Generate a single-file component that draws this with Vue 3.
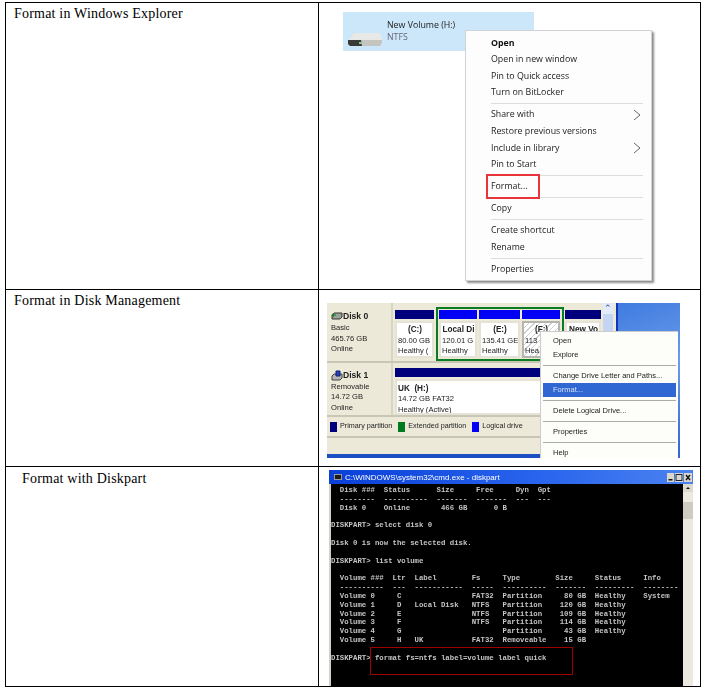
<script setup>
const explorerMenu = [
  { t: 'Open', b: true }, { t: 'Open in new window' }, { t: 'Pin to Quick access' }, { t: 'Turn on BitLocker' }, { sep: true },
  { t: 'Share with', arrow: true }, { t: 'Restore previous versions' }, { t: 'Include in library', arrow: true }, { t: 'Pin to Start' }, { sep: true },
  { t: 'Format...', mark: true }, { sep: true }, { t: 'Copy' }, { sep: true },
  { t: 'Create shortcut' }, { t: 'Rename' }, { sep: true }, { t: 'Properties' }
]
const diskMenu = [
  { t: 'Open' }, { t: 'Explore' }, { sep: true }, { t: 'Change Drive Letter and Paths...' }, { t: 'Format...', active: true }, { sep: true },
  { t: 'Delete Logical Drive...' }, { sep: true }, { t: 'Properties' }, { sep: true }, { t: 'Help' }
]
const partitions = [
  { name: '(C:)', size: '80.00 GB', state: 'Healthy (', w: 39, bar: 'navy', after: 3 },
  { name: 'Local Di', size: '120.01 G', state: 'Healthy', w: 38, bar: 'blue', after: 0 },
  { name: '(E:)', size: '135.41 GE', state: 'Healthy', w: 41, bar: 'blue', after: 0 },
  { name: '(F:)', size: '113', state: 'Hea', w: 38, bar: 'blue', hatch: true, after: 3 },
  { name: 'New Vo', size: '', state: '', w: 36, bar: 'navy', after: 0 }
]
const consoleText = `  Disk ###  Status      Size     Free     Dyn  Gpt
  --------  ----------  -------  -------  ---  ---
  Disk 0    Online       466 GB      0 B

DISKPART> select disk 0

Disk 0 is now the selected disk.

DISKPART> list volume

  Volume ###  Ltr  Label        Fs     Type        Size     Status     Info
  ----------  ---  -----------  -----  ----------  -------  ---------  --------
  Volume 0     C                FAT32  Partition     80 GB  Healthy    System
  Volume 1     D   Local Disk   NTFS   Partition    120 GB  Healthy
  Volume 2     E                NTFS   Partition    109 GB  Healthy
  Volume 3     F                NTFS   Partition    114 GB  Healthy
  Volume 4     G                       Partition     43 GB  Healthy
  Volume 5     H   UK           FAT32  Removeable    15 GB

DISKPART> format fs=ntfs label=volume label quick`
</script>

<template>
  <main class="table">
    <div class="cell label first">Format in Windows Explorer</div>
    <div class="cell shot explorer">
      <div class="tile">
        <svg class="drive" viewBox="0 0 36 16" width="36" height="16" aria-hidden="true">
          <path d="M7 1 H33 L35 8 H2 Z" fill="#e8e8e6" />
          <path d="M1 8 H35 V11 L33 14 H3 L1 12 Z" fill="#c4c4c0" />
          <path d="M1 8 H14 L15 14 H3 L1 12 Z" fill="#3a3a38" />
          <path d="M12 10 h3 v2 h-3 Z" fill="#8fc98f" />
        </svg>
        <div class="tile-text">
          <span class="tile-name">New Volume (H:)</span>
          <span class="tile-fs">NTFS</span>
        </div>
      </div>
      <ul class="win-menu">
        <template v-for="(m, i) in explorerMenu" :key="i">
          <li v-if="m.sep" class="win-sep"></li>
          <li v-else class="win-item" :class="{ bold: m.b }">
            <span :class="{ mark: m.mark }">{{ m.t }}</span>
            <svg v-if="m.arrow" class="chev" viewBox="0 0 8 12" width="8" height="12" aria-hidden="true"><path d="M1 1 L7 6 L1 11" fill="none" stroke="#666" stroke-width="1" /></svg>
          </li>
        </template>
      </ul>
    </div>

    <div class="cell label">Format in Disk Management</div>
    <div class="cell shot diskwrap">
      <div class="dm">
        <div class="dm-main">
          <div class="disk-row d0">
            <div class="disk-info">
              <b>
                <svg class="dico" viewBox="0 0 12 11" width="12" height="11" aria-hidden="true">
                  <path d="M3 2 H11 V6 L9 8 H1 V4 Z" fill="#9aa39a" stroke="#333" stroke-width="1" />
                  <path d="M5 4 H1 M1 4 L3 2.5 M1 4 L3 5.5" fill="none" stroke="#1f7a2c" stroke-width="1.2" />
                </svg>Disk 0
              </b>
              <span>Basic</span><span>465.76 GB</span><span>Online</span>
            </div>
            <div class="parts">
              <div class="green"></div>
              <div v-for="p in partitions" :key="p.name" class="part" :style="{ width: p.w + 'px', marginRight: p.after + 'px' }">
                <div class="bar" :class="p.bar"></div>
                <div class="pbox" :class="{ hatch: p.hatch }">
                  <b>{{ p.name }}</b><span>{{ p.size }}</span><span>{{ p.state }}</span>
                </div>
              </div>
            </div>
          </div>
          <div class="disk-row d1">
            <div class="disk-info">
              <b>
                <svg class="dico" viewBox="0 0 12 11" width="12" height="11" aria-hidden="true">
                  <path d="M1 6 L3 4 H11 V8 L9 10 H1 Z" fill="#b5b5b5" stroke="#444" stroke-width="1" />
                  <path d="M5 1 H9 V6 H5 Z" fill="#2a3fc0" stroke="#10206e" stroke-width="1" />
                </svg>Disk 1
              </b>
              <span>Removable</span><span>14.72 GB</span><span>Online</span>
            </div>
            <div class="uk">
              <div class="bar navy"></div>
              <div class="pbox wide"><b>UK&nbsp; (H:)</b><span>14.72 GB FAT32</span><span>Healthy (Active)</span></div>
            </div>
          </div>
          <div class="legend">
            <i class="sw navy"></i><span>Primary partition</span>
            <i class="sw greenfill"></i><span>Extended partition</span>
            <i class="sw blue"></i><span>Logical drive</span>
          </div>
          <div class="status"></div>
          <div class="taskbar"></div>
        </div>
        <div class="dm-scroll"><span>⌃</span></div>
        <div class="desktop"></div>
        <ul class="xp-menu">
          <template v-for="(m, i) in diskMenu" :key="i">
            <li v-if="m.sep" class="xp-sep"></li>
            <li v-else class="xp-item" :class="{ active: m.active }">{{ m.t }}</li>
          </template>
        </ul>
      </div>
    </div>

    <div class="cell label third">Format with Diskpart</div>
    <div class="cell shot conwrap">
      <div class="con">
        <div class="con-title">
          <i class="con-ico"></i>
          <span>C:\WINDOWS\system32\cmd.exe - diskpart</span>
          <div class="con-btns">
            <svg viewBox="0 0 7 9" width="7" height="9" aria-hidden="true"><rect width="7" height="9" fill="#d9d6cc" /><rect x="1.5" y="6" width="4" height="1.5" fill="#111" /></svg>
            <svg viewBox="0 0 8 9" width="8" height="9" aria-hidden="true"><rect width="8" height="9" fill="#d9d6cc" /><rect x="1" y="1.5" width="6" height="6" fill="none" stroke="#222" /></svg>
            <svg viewBox="0 0 8 9" width="8" height="9" aria-hidden="true"><rect width="8" height="9" fill="#d9d6cc" /><path d="M2 2 L6 7 M6 2 L2 7" stroke="#111" stroke-width="1.4" /></svg>
          </div>
        </div>
        <div class="con-body">
          <pre class="con-text">{{ consoleText }}</pre>
          <div class="con-scroll">
            <span class="up"><svg viewBox="0 0 10 8" width="10" height="8" aria-hidden="true"><path d="M3 5 L5 3 L7 5 Z" fill="#111" /></svg></span>
            <span class="thumb"></span>
          </div>
          <div class="con-mark"></div>
        </div>
      </div>
    </div>
  </main>
</template>

<style scoped>
.table {
  box-sizing: border-box;
  display: grid;
  grid-template-columns: 313px 382px;
  grid-template-rows: 287px 177px 220px;
  width: 696px;
  margin: 2px 0 0 5px;
  border-top: 1px solid #000;
  border-left: 1px solid #000;
  height: 685px;
  background: #fff;
}
.cell {
  box-sizing: border-box;
  border-right: 1px solid #000;
  border-bottom: 1px solid #000;
  position: relative;
  overflow: hidden;
}
.label {
  font-family: "Liberation Serif", serif;
  font-size: 14px;
  letter-spacing: .2px;
  color: #000;
  padding: 3px 0 0 8px;
  line-height: 16px;
}
.third { padding-left: 16px; padding-top: 4px; }

.shot > * { filter: blur(.3px); }

/* Explorer */
.explorer { font-family: "Open Sans", sans-serif; }
.tile {
  width: 191px;
  height: 39px;
  margin: 9px 0 0 24px;
  background: #cce6fa;
  display: flex;
  align-items: flex-start;
  gap: 4px;
  padding: 0 0 0 4px;
  box-sizing: border-box;
}
.drive { margin-top: 20px; flex: none; }
.tile-text { display: flex; flex-direction: column; padding-top: 7px; font-size: 8.8px; line-height: 12px; }
.tile-name { color: #222; }
.tile-fs { color: #667; }
.win-menu {
  position: absolute;
  left: 146px;
  top: 27px;
  width: 187px;
  height: 251px;
  margin: 0;
  padding: 3.5px 8px 0 25px;
  box-sizing: border-box;
  list-style: none;
  background: #fdfdfd;
  border: 1px solid #cfd3d6;
  box-shadow: 2px 2px 2px #8c8c8c;
  font-size: 8.8px;
  color: #222;
}
.win-item { height: 16.6px; line-height: 16.6px; display: flex; justify-content: space-between; align-items: center; }
.win-item.bold { font-weight: 700; color: #111; }
.win-sep { height: 1px; background: #ddd; margin: 2.5px 0 2px; }
.chev { margin-right: 2px; }
.mark {
  outline: 2px solid #e8343a;
  padding: 2px 10px 3px 3px;
  margin-left: -3px;
}

/* Disk Management */
.dm {
  position: absolute;
  left: 8px;
  top: 13px;
  width: 353px;
  height: 155px;
  display: flex;
  background: #ece9d8;
  font-family: "Liberation Sans", sans-serif;
  font-size: 7.6px;
  line-height: 10.7px;
  color: #222;
}
.dm-main { width: 276px; display: flex; flex-direction: column; flex: none; }
.disk-row { display: flex; border-bottom: 2px solid #c9c6b6; box-sizing: border-box; }
.d0 { height: 60px; }
.d1 { height: 55px; }
.disk-info {
  width: 66px;
  flex: none;
  padding: 8px 0 0 4px;
  box-sizing: border-box;
  display: flex;
  flex-direction: column;
  border-right: 2px solid #d8d5c5;
}
.d1 .disk-info { padding-top: 7px; }
.disk-info b { font-size: 8.6px; line-height: 11px; padding-bottom: 1px; display: flex; align-items: center; }
.dico { margin-right: 0; flex: none; }
.parts { position: relative; display: flex; gap: 2px; padding: 7px 0 0 2px; flex: 1; }
.green {
  position: absolute;
  left: 43px;
  top: 4px;
  width: 128px;
  height: 54px;
  box-sizing: border-box;
  border: 2px solid #0a7d22;
}
.part { display: flex; flex-direction: column; flex: none; }
.bar { height: 9px; flex: none; }
.navy { background: #00007c; }
.blue { background: #0000f5; }
.greenfill { background: #007a1e; }
.pbox {
  margin-top: 2px;
  height: 37px;
  background: #fff;
  border: 2px solid #e6e3d6;
  display: flex;
  flex-direction: column;
  padding: 2px 0 0 1px;
  overflow: hidden;
  white-space: nowrap;
  box-sizing: border-box;
}
.pbox b { text-align: center; font-size: 8.2px; }
.hatch { background: repeating-linear-gradient(135deg, #fff 0 3px, #cfcfcf 3px 4px); border-color: #b5b5b0; }
.uk { flex: 1; padding: 5px 0 0 2px; display: flex; flex-direction: column; }
.pbox.wide { height: 36px; border-color: #e6e3d6; padding: 3px 0 0 1px; }
.pbox.wide b { text-align: left; }
.legend { display: flex; align-items: center; height: 19px; padding-left: 3px; gap: 3px; flex: none; font-size: 7.2px; }
.legend span { margin-right: 3px; }
.sw { width: 7px; height: 10px; flex: none; }
.status { height: 16px; background: #ece9d8; border-top: 2px solid #c8c5b5; flex: none; }
.taskbar { height: 4px; margin-top: auto; background: #1d4fc4; }
.dm-scroll { width: 10px; background: #c3d5f2; flex: none; text-align: center; color: #2a4a8a; font-size: 9px; height: 155px; }
.dm-scroll span { display: block; background: #e2ebfa; height: 11px; }
.desktop {
  flex: 1;
  margin-left: 3px;
  background: linear-gradient(160deg, #3f7be0, #6b9ce8 45%, #2f66d4);
  border-left: 2px solid #1136b8;
}
.xp-menu {
  position: absolute;
  left: 213px;
  top: 28px;
  width: 138px;
  height: 127px;
  margin: 0;
  padding: 2px 2px 0;
  box-sizing: border-box;
  list-style: none;
  background: #fdfdfa;
  border-top: 1px solid #ccc;
  border-left: 1px solid #ccc;
  font-size: 7.5px;
}
.xp-item { height: 14px; line-height: 14px; padding-left: 10px; color: #222; }
.xp-item.active { background: #2f67d3; color: #d6e2f6; }
.xp-sep { height: 1px; background: #aaa; margin: 3px 0; }

/* Console */
.con {
  position: absolute;
  left: 10px;
  top: 3px;
  width: 364px;
  height: 216px;
  display: flex;
  flex-direction: column;
  background: #d4d0c8;
}
.con-title {
  height: 14px;
  flex: none;
  display: flex;
  align-items: center;
  gap: 3px;
  padding: 0 1px 0 5px;
  background: linear-gradient(90deg, #0a3fd8, #2a66ee 60%, #4b82f0);
  color: #fff;
  font: 400 8px "Liberation Sans", sans-serif;
}
.con-ico { width: 8px; height: 6px; background: #1b1b1b; border: 1px solid #999; box-sizing: border-box; }
.con-btns { margin-left: auto; display: flex; gap: 1px; }
.con-body { flex: 1; position: relative; margin-left: 2px; background: #000; overflow: hidden; }
.con-text {
  margin: 0;
  padding: 2px 0 0 0;
  font: 700 7.33px/8.83px "Liberation Mono", monospace;
  color: #c4c4c4;
  white-space: pre;
  overflow: hidden;
}
.con-scroll {
  position: absolute;
  right: 0;
  top: 0;
  bottom: 0;
  width: 10px;
  background: #ece9e0;
  display: flex;
  flex-direction: column;
}
.con-scroll .up { height: 8px; background: #dcd9d0; line-height: 0; }
.con-scroll .thumb { height: 17px; margin-top: 10px; background: #cfcbc0; }
.con-mark {
  position: absolute;
  left: 39px;
  top: 163px;
  width: 203px;
  height: 28px;
  box-sizing: border-box;
  border: 1px solid #a00000;
}
</style>
